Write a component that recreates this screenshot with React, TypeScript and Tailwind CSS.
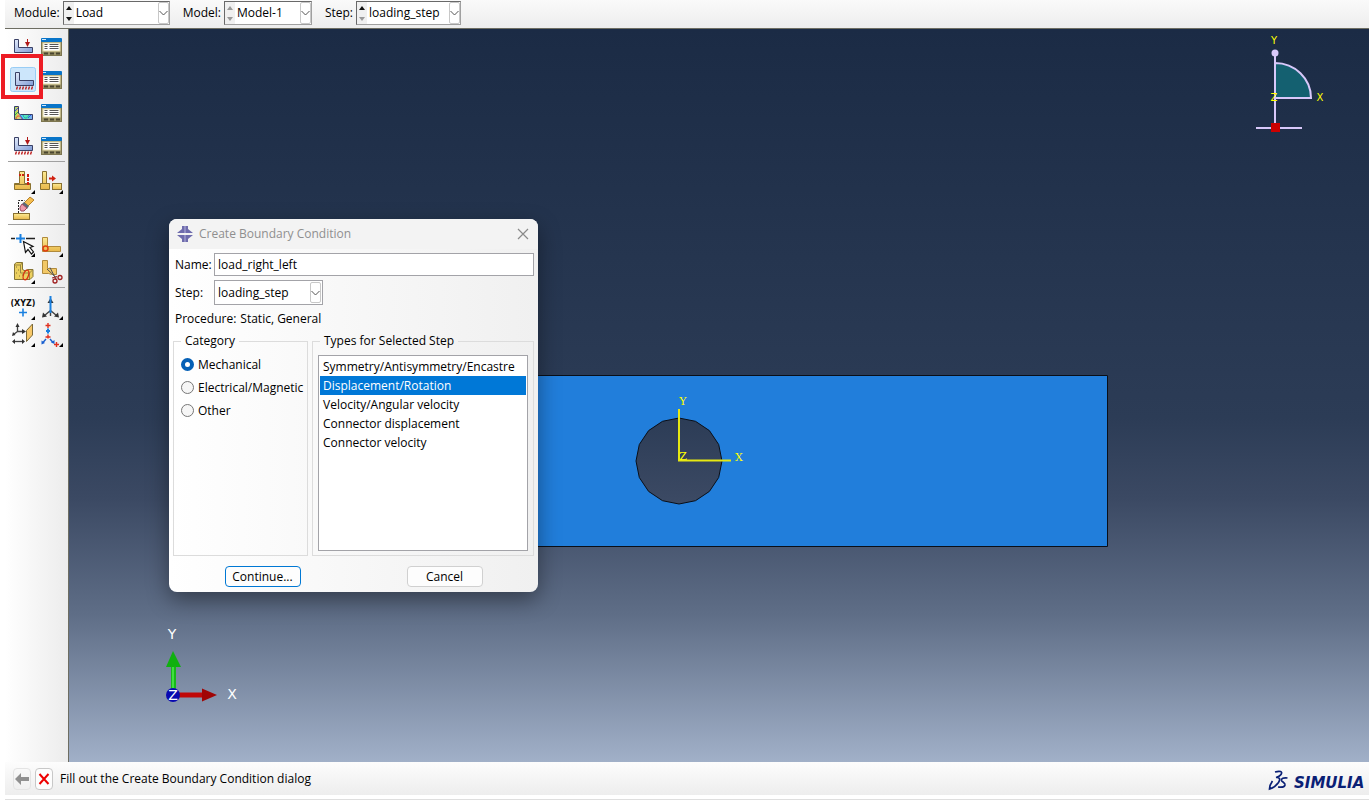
import { useState } from "react"
import type { ReactNode } from "react"

const CATEGORIES = ["Mechanical", "Electrical/Magnetic", "Other"]

const STEP_TYPES = [
  "Symmetry/Antisymmetry/Encastre",
  "Displacement/Rotation",
  "Velocity/Angular velocity",
  "Connector displacement",
  "Connector velocity",
]

// 16-sided outline of the hole
const HOLE_POINTS = Array.from({ length: 16 }, (_, i) => {
  const angle = (i * Math.PI * 2) / 16 - Math.PI / 2
  return `${(86 + 43 * Math.cos(angle)).toFixed(1)},${(86 + 43 * Math.sin(angle)).toFixed(1)}`
})

function DropArrow() {
  return (
    <span className="flex w-[11px] items-center justify-center rounded-[2px] border border-[#c8c8c8]">
      <svg
        className="h-2 w-[9px] shrink-0"
        viewBox="0 0 9 8"
        fill="none"
        stroke="#555"
        aria-hidden="true"
      >
        <path d="M0.5 2l4 4 4-4" />
      </svg>
    </span>
  )
}

interface SpinComboProps {
  id: string
  label: string
  value: string
  width: string
  upEnabled?: boolean
  downEnabled?: boolean
}

function SpinCombo({ id, label, value, width, upEnabled, downEnabled }: SpinComboProps) {
  return (
    <div className="flex items-center gap-[3px]">
      <label htmlFor={id}>{label}</label>
      <div
        className={`flex h-6 items-stretch border border-b-[#a0a0a0] border-l-[#696969] border-r-[#a0a0a0] border-t-[#696969] bg-white ${width}`}
      >
        <div className="flex w-2.5 flex-col bg-[#f0f0f0]">
          <button
            type="button"
            aria-label={`Previous ${label}`}
            className="flex flex-1 items-center justify-center"
          >
            <svg className="h-1 w-1.5" viewBox="0 0 6 4" fill={upEnabled ? "#111" : "#999"}>
              <path d="M3 0l3 4H0z" />
            </svg>
          </button>
          <button
            type="button"
            aria-label={`Next ${label}`}
            className="flex flex-1 items-center justify-center"
          >
            <svg className="h-1 w-1.5" viewBox="0 0 6 4" fill={downEnabled ? "#111" : "#999"}>
              <path d="M3 4l3-4H0z" />
            </svg>
          </button>
        </div>
        <select
          id={id}
          defaultValue={value}
          className="min-w-0 flex-1 appearance-none bg-transparent pl-0.5 outline-none"
        >
          <option>{value}</option>
        </select>
        <DropArrow />
      </div>
    </div>
  )
}

interface ToolProps {
  label: string
  tall?: boolean
  flyout?: boolean
  children: ReactNode
}

function Tool({ label, tall, flyout, children }: ToolProps) {
  const height = tall ? 33 : 27
  return (
    <button type="button" aria-label={label} title={label} className="block w-7">
      <svg width="28" height={height} viewBox={`0 0 28 ${height}`} fill="none">
        {children}
        {flyout && <path d="M26 22v4h-4z" fill="#000" />}
      </svg>
    </button>
  )
}

function Bracket({ y = 0 }: { y?: number }) {
  return (
    <path d={`M5.5 ${10.5 + y}h4v8h14v5h-18z`} fill="url(#steel)" stroke="#3a4166" />
  )
}

function LoadArrow({ y = 0 }: { y?: number }) {
  return (
    <>
      <path d={`M18.5 ${10 + y}v5`} stroke="#b01818" />
      <path d={`M16 ${13 + y}h5l-2.5 5z`} fill="#b01818" />
    </>
  )
}

function Supports({ y = 0 }: { y?: number }) {
  return (
    <path
      d={`M7.5 ${24.5 + y}l-1 3m4-3l-1 3m4-3l-1 3m4-3l-1 3m4-3l-1 3m4-3l-1 3`}
      stroke="#c02020"
      strokeWidth="1.4"
    />
  )
}

function ManagerTool({ label }: { label: string }) {
  return (
    <Tool label={label} tall>
      <rect x="4.5" y="12.5" width="20" height="14" fill="#9c9468" stroke="#7d7650" />
      <rect x="4" y="9" width="21" height="4" rx="1" fill="#0874c8" />
      <path d="M5 10.500h4" stroke="#cfe8fb" />
      <rect x="6" y="14" width="17" height="8" fill="#fff" stroke="#e5dca9" />
      <path d="M7.5 15.5h3m-3 2h3m-3 2h3M12.5 15.5h9m-9 2h9m-9 2h9" stroke="#555" />
      <path d="M7 24.5h4m2 0h4m2 0h4" stroke="#4a4630" strokeWidth="2" />
    </Tool>
  )
}

function Separator() {
  return <hr className="mx-[3px] border-t border-[#a0a0a0]" />
}

function Toolbox() {
  return (
    <aside className="w-16 shrink-0 border-r border-[#6d6d62] bg-linear-to-r from-white to-[#ececec]">
      <svg width="0" height="0" className="block" aria-hidden="true">
        <defs>
          <linearGradient id="steel" x1="0" y1="0" x2="1" y2="1">
            <stop offset="0" stopColor="#e4ecfa" />
            <stop offset="1" stopColor="#7f9bd6" />
          </linearGradient>
          <linearGradient id="brass" x1="0" y1="0" x2="0" y2="1">
            <stop offset="0" stopColor="#fdeb95" />
            <stop offset="1" stopColor="#e8b84a" />
          </linearGradient>
          <linearGradient id="contour" x1="0" y1="0" x2="1" y2="0">
            <stop offset="0" stopColor="#7fe070" />
            <stop offset="0.2" stopColor="#f6c85a" />
            <stop offset="0.4" stopColor="#5ad8f4" />
            <stop offset="0.65" stopColor="#59e6b4" />
            <stop offset="1" stopColor="#7fa0ff" />
          </linearGradient>
        </defs>
      </svg>

      <div className="grid grid-cols-[28px_28px] pl-1">
        <Tool label="Create Load" tall>
          <Bracket />
          <LoadArrow />
        </Tool>
        <ManagerTool label="Load Manager" />
        <div className="relative">
          <Tool label="Create Boundary Condition" tall>
            <rect x="1.5" y="5.5" width="25" height="24" rx="2" fill="#cce6fb" stroke="#99cdf5" />
            <g transform="translate(1 0)">
              <Bracket />
              <Supports />
            </g>
          </Tool>
          <span className="pointer-events-none absolute -left-2 -top-2 h-[45px] w-[42px] border-4 border-[#ed1c24]" />
        </div>
        <ManagerTool label="Boundary Condition Manager" />
        <Tool label="Create Predefined Field" tall>
          <path d="M5.5 11.5h4v7l2 1h12v5h-18z" fill="url(#contour)" stroke="#3a4068" />
          <path d="M6 16l3-3" stroke="#4050e0" />
          <path d="M6 20l3-3" stroke="#30b040" />
          <path d="M7 24c0-4 5-4 6 0" stroke="#f04030" />
          <path d="M14 20c1 4 4 4 6 0" stroke="#20b0a0" />
          <path d="M11 20l3 4m5-1l3-3" stroke="#2a60f0" />
        </Tool>
        <ManagerTool label="Predefined Field Manager" />
        <Tool label="Create Load Case" tall>
          <Bracket y={-1} />
          <LoadArrow y={-1} />
          <Supports y={-1} />
        </Tool>
        <ManagerTool label="Load Case Manager" />
      </div>

      <Separator />

      <div className="grid grid-cols-[28px_28px] pb-0.5 pl-1 pt-1.5">
        <Tool label="Partition Cell" flyout>
          <path d="M10.5 3.5h5v12h6v6h-16v-6h5z" fill="url(#brass)" stroke="#8a7230" />
          <path d="M5.5 16.5h16" stroke="#8a7230" />
          <path d="M10 7h6" stroke="#d02010" strokeWidth="2" strokeDasharray="2 1" />
          <path d="M19 6v11" stroke="#d02010" strokeWidth="2" strokeDasharray="3 1" />
        </Tool>
        <Tool label="Translate Part" flyout>
          <path d="M5.5 3.5h4v12h3v6h-9v-6h2z" fill="url(#brass)" stroke="#8a7230" />
          <path d="M3.5 15.5h9" stroke="#8a7230" />
          <rect x="15.5" y="15.5" width="9" height="6" fill="url(#brass)" stroke="#8a7230" />
          <path d="M12 10.500h4" stroke="#d02010" strokeWidth="2" />
          <path d="M15 7.5v6l4-3z" fill="#d02010" />
        </Tool>
        <Tool label="Remove Faces">
          <path d="M9.5 18V5.5h6" stroke="#222" strokeDasharray="2 1" />
          <rect x="4.5" y="18.5" width="16" height="6" fill="url(#brass)" stroke="#8a7230" />
          <path d="M15 8l6-6 4 3-6 6z" fill="#f5bd4e" stroke="#b5822c" />
          <path d="M13 9l2-2 5 4-2 3z" fill="#5b6b78" />
          <path d="M11 12l2-3 5 4-3 3h-3l-1-2z" fill="#ee9aac" stroke="#9a4a60" />
        </Tool>
      </div>

      <Separator />

      <div className="grid grid-cols-[28px_28px] pb-0.5 pl-1 pt-1.5">
        <Tool label="Create Datum Point" flyout>
          <path d="M2 7.5h4m11 0h9" stroke="#222" strokeWidth="1.4" />
          <path d="M7 7.5h9M11.5 3v9" stroke="#1a80e0" strokeWidth="2" />
          <path
            d="M14.5 10.5l2 11 2.5-3 3.5 4.5 2-2-3.5-4.500 3-1z"
            fill="#fff"
            stroke="#111"
            strokeWidth="1.2"
          />
        </Tool>
        <Tool label="Offset Faces" flyout>
          <path d="M5.5 6.5h5v9h13v5h-18z" fill="url(#brass)" stroke="#b08a3c" />
          <circle cx="8.5" cy="17.5" r="2.5" stroke="#e04010" strokeWidth="1.5" />
        </Tool>
        <Tool label="Repair Edges" flyout>
          <path
            d="M5.5 6l2-1.5h6v7l3 1.5 2-1.5h5.5v7l-3 3h-15.5z"
            fill="#ecd060"
            stroke="#857434"
          />
          <path d="M5.5 7h6v8h9v6M11.5 7l2-2.5M20.5 15l3-3" stroke="#9a8740" />
          <path d="M7 9h1m1 3h1m-3 3h1m2 3h1m2-1h1" stroke="#857434" />
          <ellipse
            cx="17"
            cy="17"
            rx="2.5"
            ry="5"
            stroke="#d83010"
            strokeWidth="1.2"
            transform="rotate(18 17 17)"
          />
        </Tool>
        <Tool label="Cut Geometry">
          <path d="M5.5 2.5h5v8h9v6h-5l-3-1h-6z" fill="#f2c866" stroke="#b08a3c" />
          <path d="M10 11l9.500 9M13 9.5l6 12" stroke="#555" />
          <path d="M15 20l5-1.500" stroke="#a02020" />
          <circle cx="18" cy="23" r="2" stroke="#a02020" strokeWidth="1.3" />
          <circle cx="23" cy="19.5" r="2" stroke="#a02020" strokeWidth="1.3" />
        </Tool>
      </div>

      <Separator />

      <div className="grid grid-cols-[28px_28px] pl-1 pt-1.5">
        <Tool label="Datum Coordinates" flyout>
          <text
            x="14"
            y="12"
            textAnchor="middle"
            fill="#111"
            className="font-['DejaVu_Sans',sans-serif] text-[8px] font-bold"
          >
            (XYZ)
          </text>
          <path d="M10 18.5h8M14 14.5v8" stroke="#1a80e0" strokeWidth="1.6" />
        </Tool>
        <Tool label="Datum Axis" flyout>
          <path d="M13.5 16.5V22M13.5 16.5l-6 5m6-5l6 5" stroke="#444" strokeWidth="1.4" />
          <path d="M5 23.5l1-5 4 4zM22 23.5l-1-5-4 4z" fill="#333" />
          <path d="M13.5 4l3 5h-6z" fill="#333" />
          <path d="M13.5 2v17" stroke="#1a80e0" strokeWidth="2" />
        </Tool>
        <Tool label="Datum Plane" flyout>
          <path d="M8.5 5v5.5h6M8.5 10.5l-4 3" stroke="#444" strokeWidth="1.3" />
          <path d="M8.5 2l2 4h-4zM17 10.5l-4 2.5V8zM3 15l1-4 2.500 3z" fill="#333" />
          <path d="M5 20.5h9" stroke="#444" strokeWidth="1.3" />
          <path d="M3 20.5l3-2.500v5zM16 20.5l-3-2.500v5z" fill="#333" />
          <path d="M17.5 9.5l6-6.500v11l-6 6.500z" fill="#f7c868" stroke="#7b6a3a" />
        </Tool>
        <Tool label="Datum System" flyout>
          <path
            d="M8.5 4.5h5M11 2v5M8.5 16h5M11 13.5v4M17 23.5h5M19.5 21v5"
            stroke="#e03020"
            strokeWidth="1.4"
          />
          <path d="M11 7.5v5M9 10h4" stroke="#1a80e0" strokeWidth="2" />
          <path d="M9 18l-3 3.5M13 18l3 3.5" stroke="#1a60d0" strokeWidth="1.4" />
          <path d="M4.5 23.5v-4l3.5 2.5zM17.5 23v-4L14 21.5z" fill="#1a60d0" />
        </Tool>
      </div>
    </aside>
  )
}

function BoundaryDialog() {
  const [category, setCategory] = useState("Mechanical")
  const [type, setType] = useState("Displacement/Rotation")

  return (
    <section
      role="dialog"
      aria-label="Create Boundary Condition"
      className="absolute left-[100px] top-[190px] w-[369px] overflow-hidden rounded-lg bg-linear-to-r from-white to-[#f0f0f0] pb-[5px] shadow-[0_8px_22px_rgba(0,0,0,0.4)]"
    >
      <header className="flex h-[30px] items-center bg-[#f3f3f3] px-2 text-[#8f8f8f]">
        <svg className="mr-1.5 h-4 w-4" viewBox="0 0 16 16" aria-hidden="true">
          <path d="M5 0h6v3l5 4H0l5-4zM0 9h16l-5 4v3H5v-3z" fill="#6f6cad" />
          <path d="M7 0h2v7H7zM7 9h2v7H7z" fill="#918fc4" />
        </svg>
        <h1 className="flex-1">Create Boundary Condition</h1>
        <button type="button" aria-label="Close">
          <svg width="14" height="14" viewBox="0 0 14 14" stroke="#8a8a8a" strokeWidth="1.2">
            <path d="M2 2l10 10M12 2L2 12" />
          </svg>
        </button>
      </header>

      <div className="flex flex-col gap-1 px-1 pt-1">
        <div className="flex h-[23px] items-center pl-0.5">
          <label htmlFor="bc-name" className="w-[39px]">
            Name:
          </label>
          <input
            id="bc-name"
            type="text"
            defaultValue="load_right_left"
            className="h-full min-w-0 flex-1 border border-[#a3a3a8] bg-white px-[3px] outline-none"
          />
        </div>
        <div className="flex h-[25px] items-center pl-0.5">
          <label htmlFor="bc-step" className="w-[39px]">
            Step:
          </label>
          <div className="flex h-full w-[109px] items-stretch border border-[#a3a3a8] bg-white p-px">
            <select
              id="bc-step"
              defaultValue="loading_step"
              className="min-w-0 flex-1 appearance-none bg-transparent pl-0.5 outline-none"
            >
              <option>loading_step</option>
            </select>
            <DropArrow />
          </div>
        </div>
        <p className="flex h-5 items-center gap-1 pl-0.5">
          <span>Procedure:</span>
          <span>Static, General</span>
        </p>
      </div>

      <div className="mt-1 flex gap-1 px-1">
        <fieldset className="h-[223px] w-[135px] shrink-0 border border-[#dcdcdc] pl-[7px]">
          <legend className="px-1 leading-4">Category</legend>
          <div className="flex flex-col pt-1">
            {CATEGORIES.map((name) => (
              <label key={name} className="flex h-[23px] items-center gap-1 whitespace-nowrap">
                <input
                  type="radio"
                  name="category"
                  checked={category === name}
                  onChange={() => setCategory(name)}
                  className="h-[13px] w-[13px] shrink-0 appearance-none rounded-full border border-[#777] bg-[#f6f6f6] checked:border-4 checked:border-[#0560b6] checked:bg-white"
                />
                {name}
              </label>
            ))}
          </div>
        </fieldset>
        <fieldset className="h-[223px] min-w-0 flex-1 border border-[#dcdcdc] px-[5px]">
          <legend className="ml-0.5 px-1 leading-4">Types for Selected Step</legend>
          <ul
            role="listbox"
            aria-label="Types for Selected Step"
            className="mt-1.5 h-[196px] border border-[#a3a3a8] bg-white p-px"
          >
            {STEP_TYPES.map((name) => (
              <li
                key={name}
                role="option"
                aria-selected={type === name}
                onClick={() => setType(name)}
                className={`h-[19px] whitespace-nowrap px-[3px] leading-[19px] ${
                  type === name ? "bg-[#0078d7] text-white" : ""
                }`}
              >
                {name}
              </li>
            ))}
          </ul>
        </fieldset>
      </div>

      <div className="mt-2.5 flex justify-center gap-[106px]">
        <button
          type="button"
          className="h-[21px] w-[76px] rounded-sm border border-[#0078d4] bg-[#fdfdfd]"
        >
          Continue...
        </button>
        <button
          type="button"
          className="h-[21px] w-[76px] rounded-sm border border-[#d0d0d0] bg-[#fdfdfd]"
        >
          Cancel
        </button>
      </div>
    </section>
  )
}

function Viewport() {
  return (
    <main className="relative min-w-0 flex-1 overflow-hidden bg-[linear-gradient(to_bottom,#1b2b45_0%,#2c3c56_53%,#3b4963_64%,#5f6e87_80%,#a1b0c8_100%)]">
      {/* plate with the hole cut out, drawn around the part origin */}
      <svg
        className="absolute left-[182px] top-[346px]"
        width="857"
        height="172"
        viewBox="-342 0 857 172"
        aria-label="Plate with hole"
      >
        <path
          d={`M-341.5 0.5h856v171h-856z M${HOLE_POINTS.join("L")}z`}
          fill="#217edb"
          fillRule="evenodd"
          stroke="#0a0f18"
        />
        <path d="M86 34v51.500h52" fill="none" stroke="#e6e812" strokeWidth="2" />
        <g
          fill="#ffff00"
          textAnchor="middle"
          className="font-['DejaVu_Serif',serif] text-[11px]"
        >
          <text x="90" y="30">Y</text>
          <text x="146" y="86">X</text>
          <text x="90" y="85">Z</text>
        </g>
      </svg>

      {/* view compass */}
      <svg
        className="absolute right-10 top-1"
        width="76"
        height="104"
        viewBox="1253 33 76 104"
        aria-label="View compass"
      >
        <path d="M1275 63a36 35 0 0 1 36 35h-36z" fill="#146070" stroke="#d8c8fa" strokeWidth="2" />
        <path d="M1275 53v72M1256 128h46" stroke="#d8c8fa" strokeWidth="2" />
        <circle cx="1275" cy="53" r="3.500" fill="#d8c8fa" />
        <rect x="1271" y="123" width="9" height="9" fill="#cc0000" />
        <g
          fill="#ffff00"
          textAnchor="middle"
          className="font-['DejaVu_Sans',sans-serif] text-[10px]"
        >
          <text x="1274" y="44">Y</text>
          <text x="1274" y="101">Z</text>
          <text x="1320" y="101">X</text>
        </g>
      </svg>

      {/* orientation triad */}
      <svg
        className="absolute bottom-14 left-[91px]"
        width="84"
        height="84"
        viewBox="160 622 84 84"
        aria-label="Orientation triad"
      >
        <path d="M173.5 692v-28" stroke="#18b818" strokeWidth="5" />
        <path d="M173 692v-28" stroke="#40e040" strokeWidth="2" />
        <path d="M173 651l8 16h-15z" fill="#10b010" />
        <path d="M178 695h26" stroke="#c00808" strokeWidth="5" />
        <path d="M217 695l-15-6.500v13z" fill="#a00505" />
        <circle cx="173" cy="695" r="7" fill="#0808b0" />
        <g
          fill="#fff"
          textAnchor="middle"
          className="font-['DejaVu_Sans',sans-serif] text-[14px]"
        >
          <text x="172" y="639">Y</text>
          <text x="232" y="699">X</text>
          <text x="173" y="700">Z</text>
        </g>
      </svg>

      <BoundaryDialog />
    </main>
  )
}

function PromptArea() {
  return (
    <footer className="border-b border-[#dedede] bg-white pb-1">
      <div className="flex h-[33px] items-center bg-linear-to-b from-[#fdfdfd] to-[#ededed] pl-2">
        <button
          type="button"
          aria-label="Previous"
          className="flex h-[22px] w-[18px] items-center justify-center rounded-sm border border-[#e4e4e4]"
        >
          <svg width="14" height="12" viewBox="0 0 14 12" fill="#909090">
            <path d="M0 6l6-6v4h8v4H6v4z" />
          </svg>
        </button>
        <button
          type="button"
          aria-label="Cancel procedure"
          className="ml-1 flex h-[22px] w-[18px] items-center justify-center rounded-sm border border-[#c8c8c8] bg-[#fdfdfd]"
        >
          <svg width="12" height="12" viewBox="0 0 12 12" stroke="#ee0000" strokeWidth="2">
            <path d="M1.500 1l9 10M10.500 1l-9 10" />
          </svg>
        </button>
        <p className="ml-[7px] flex-1">Fill out the Create Boundary Condition dialog</p>
        <div className="flex w-[101px] items-center gap-1 overflow-hidden pt-1 text-[#0a2075]">
          <svg
            className="h-[21px] w-[22px] shrink-0"
            viewBox="0 0 22 21"
            fill="none"
            stroke="currentColor"
            strokeWidth="1.7"
            aria-hidden="true"
          >
            <path d="M7 2c5-1.500 8-.5 6 2.500-1 1.500-3 2.500-5 3 4-.5 4.500 2 2.500 5C8 16 5 18 1.500 19c0-3 1.500-6 3-8" />
            <path d="M19.500 8c-4-.5-6.500.5-6 2.500.5 1.500 4 2 3.500 4.500-.5 2-3.500 2.500-7 2" />
          </svg>
          <span className="pt-1 font-['DejaVu_Sans',sans-serif] text-[15px] font-bold italic">
            SIMULIA
          </span>
        </div>
      </div>
    </footer>
  )
}

export default function App() {
  return (
    <div className="flex h-screen min-h-[640px] flex-col overflow-hidden bg-white pl-[5px] font-['Open_Sans','Noto_Sans',sans-serif] text-[12px] leading-4 text-black">
      <header className="flex h-[29px] shrink-0 items-center gap-[13px] border-b border-[#6d6d62] bg-linear-to-b from-[#fafafa] to-[#ededed] pb-0.5 pl-[9px]">
        <SpinCombo
          id="module"
          label="Module:"
          value="Load"
          width="w-[107px]"
          upEnabled
          downEnabled
        />
        <SpinCombo id="model" label="Model:" value="Model-1" width="w-[88px]" />
        <SpinCombo id="step" label="Step:" value="loading_step" width="w-[105px]" upEnabled />
      </header>
      <div className="flex min-h-0 flex-1">
        <Toolbox />
        <Viewport />
      </div>
      <PromptArea />
    </div>
  )
}
